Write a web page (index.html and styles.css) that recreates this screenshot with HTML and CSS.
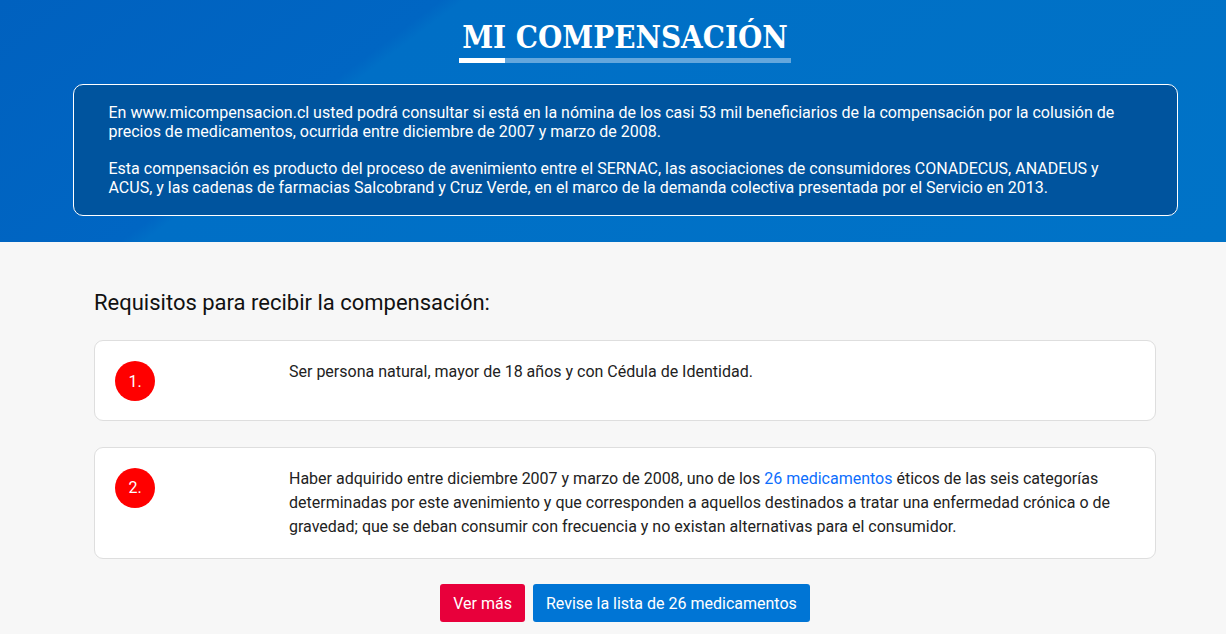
FILE: index.html
```html
<!DOCTYPE html>
<html lang="es">
<head>
<meta charset="utf-8">
<title>Mi Compensación</title>
<link rel="stylesheet" href="styles.css">
</head>
<body>
<header class="hero">
  <div class="hero-inner">
    <h1 class="title">MI COMPENSACIÓN</h1>
    <div class="intro">
      <p>En www.micompensacion.cl usted podrá consultar si está en la nómina de los casi 53 mil beneficiarios de la compensación por la colusión de precios de medicamentos, ocurrida entre diciembre de 2007 y marzo de 2008.</p>
      <p>Esta compensación es producto del proceso de avenimiento entre el SERNAC, las asociaciones de consumidores CONADECUS, ANADEUS y ACUS, y las cadenas de farmacias Salcobrand y Cruz Verde, en el marco de la demanda colectiva presentada por el Servicio en 2013.</p>
    </div>
  </div>
</header>
<main class="main">
  <div class="content">
    <h2 class="req-title">Requisitos para recibir la compensación:</h2>
    <div class="card">
      <div class="num">1.</div>
      <p class="card-text">Ser persona natural, mayor de 18 años y con Cédula de Identidad.</p>
    </div>
    <div class="card">
      <div class="num">2.</div>
      <p class="card-text">Haber adquirido entre diciembre 2007 y marzo de 2008, uno de los <a class="link" href="#">26 medicamentos</a> éticos de las seis categorías determinadas por este avenimiento y que corresponden a aquellos destinados a tratar una enfermedad crónica o de gravedad; que se deban consumir con frecuencia y no existan alternativas para el consumidor.</p>
    </div>
    <div class="actions">
      <a class="btn btn-red" href="#">Ver más</a>
      <a class="btn btn-blue" href="#">Revise la lista de 26 medicamentos</a>
    </div>
  </div>
</main>
</body>
</html>
```
FILE: styles.css
```css
* { box-sizing: border-box; }
html, body { margin: 0; padding: 0; }
body {
  background: #f7f7f7;
  font-family: Roboto, "Liberation Sans", Arial, sans-serif;
  color: #222;
}
.hero {
  height: 242px;
  background:
    linear-gradient(143deg, #0061bf 0%, #0066c3 28.5%, #006fc6 30%, #0073c7 100%);
}
.hero-inner {
  padding-left: 24px;
  display: flex;
  flex-direction: column;
  align-items: center;
}
.title {
  margin: 17px 0 0;
  padding: 0 3px 6px;
  font-family: "DejaVu Serif", serif;
  font-stretch: condensed;
  font-weight: bold;
  font-size: 31px;
  line-height: 40px;
  color: #fff;
  position: relative;
  letter-spacing: 0;
}
.title::after {
  content: "";
  position: absolute;
  left: 0; right: 0; bottom: 0;
  height: 5px;
  background: linear-gradient(90deg, #fff 0, #fff 46px, #64a7dd 46px, #64a7dd 100%);
}
.intro {
  margin-top: 21px;
  width: 1105px;
  height: 132px;
  border: 1px solid #fff;
  border-radius: 10px;
  background: #00549e;
  padding: 19px 50px 17px 35px;
  color: #fff;
  font-size: 16px;
  line-height: 18.75px;
}
.intro p { margin: 0; }
.intro p + p { margin-top: 18.75px; }
.main { padding-left: 24px; display: flex; justify-content: center; }
.content { width: 1062px; }
.req-title {
  margin: 48px 0 24px;
  font-size: 22px;
  line-height: 26px;
  font-weight: normal;
  color: #111;
}
.card {
  display: grid;
  grid-template-columns: 174px 1fr;
  align-items: start;
  background: #fff;
  border: 1px solid #dedede;
  border-radius: 9px;
  padding: 19px 20px 19px 20px;
  margin-bottom: 25.5px;
}
.num {
  width: 40px;
  height: 40px;
  margin-top: 1px;
  border-radius: 50%;
  background: #ff0000;
  color: #fff;
  font-size: 16px;
  display: flex;
  align-items: center;
  justify-content: center;
}
.card-text {
  margin: 0;
  font-size: 16px;
  line-height: 24px;
  color: #222;
}
.link { color: #0d6efd; text-decoration: none; }
.actions {
  display: flex;
  justify-content: center;
  gap: 8px;
}
.btn {
  height: 38px;
  padding: 0 13px;
  display: inline-flex;
  align-items: center;
  border-radius: 3px;
  color: #fff;
  text-decoration: none;
  font-size: 16px;
}
.btn-red { background: #e8003b; }
.btn-blue { background: #0075d5; }
```
